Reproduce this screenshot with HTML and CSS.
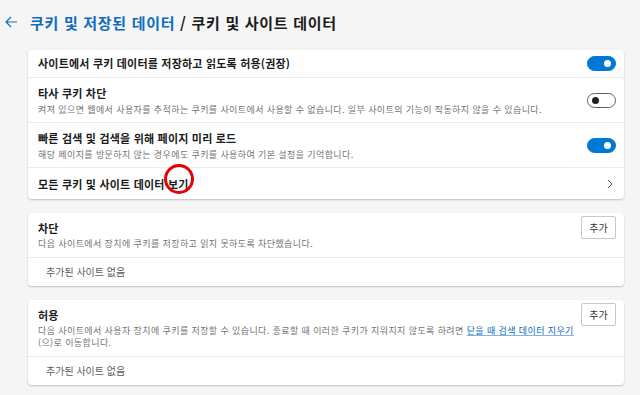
FILE: index.html
```html
<!DOCTYPE html>
<html lang="ko">
<head>
  <meta charset="UTF-8" />
  <meta name="viewport" content="width=device-width, initial-scale=1.0"/>
  <title>쿠키 및 사이트 데이터</title>
  <link rel="stylesheet" href="styles.css">
</head>
<body>
  <header class="page-head">
    <a class="back" href="#" aria-label="뒤로">
      <svg width="13" height="12" viewBox="0 0 13 12">
        <path d="M12 6H1.5M6 1L1 6l5 5" fill="none" stroke="#0f6cbd" stroke-width="1.2"/>
      </svg>
    </a>
    <h1><span class="crumb">쿠키 및 저장된 데이터</span> / 쿠키 및 사이트 데이터</h1>
  </header>

  <section class="card">
    <div class="row simple">
      <div class="row-text">
        <div class="row-title">사이트에서 쿠키 데이터를 저장하고 읽도록 허용(권장)</div>
      </div>
      <span class="toggle on"></span>
    </div>
    <div class="row">
      <div class="row-text">
        <div class="row-title">타사 쿠키 차단</div>
        <div class="row-desc">켜져 있으면 웹에서 사용자를 추적하는 쿠키를 사이트에서 사용할 수 없습니다. 일부 사이트의 기능이 작동하지 않을 수 있습니다.</div>
      </div>
      <span class="toggle"></span>
    </div>
    <div class="row">
      <div class="row-text">
        <div class="row-title">빠른 검색 및 검색을 위해 페이지 미리 로드</div>
        <div class="row-desc">해당 페이지를 방문하지 않는 경우에도 쿠키를 사용하여 기본 설정을 기억합니다.</div>
      </div>
      <span class="toggle on"></span>
    </div>
    <div class="row link-row">
      <div class="row-text">
        <div class="row-title">모든 쿠키 및 사이트 데이터 <span class="mark">보기</span></div>
      </div>
      <svg class="chevron" width="6" height="10" viewBox="0 0 6 10">
        <path d="M1 1l4 4-4 4" fill="none" stroke="#555" stroke-width="1"/>
      </svg>
    </div>
  </section>

  <section class="card">
    <div class="row list-head">
      <div class="row-text">
        <div class="row-title">차단</div>
        <div class="row-desc">다음 사이트에서 장치에 쿠키를 저장하고 읽지 못하도록 차단했습니다.</div>
      </div>
      <button class="add">추가</button>
    </div>
    <div class="empty">추가된 사이트 없음</div>
  </section>

  <section class="card">
    <div class="row list-head">
      <div class="row-text">
        <div class="row-title">허용</div>
        <div class="row-desc">다음 사이트에서 사용자 장치에 쿠키를 저장할 수 있습니다. 종료할 때 이러한 쿠키가 지워지지 않도록 하려면 <a href="#">닫을 때 검색 데이터 지우기</a>(으)로 이동합니다.</div>
      </div>
      <button class="add">추가</button>
    </div>
    <div class="empty">추가된 사이트 없음</div>
  </section>
</body>
</html>
```

FILE: styles.css
```css
body {
  margin: 0;
  font-family: "Noto Sans CJK KR", "Noto Sans", sans-serif;
  background: #f5f5f5;
  color: #1b1b1b;
}

.page-head {
  display: flex;
  align-items: center;
  height: 44px;
  padding: 0 0 6px 5px;
}

.back {
  display: flex;
  width: 25px;
}

h1 {
  margin: 0;
  font-size: 15px;
  font-weight: 700;
  letter-spacing: 0.7px;
}

.crumb {
  color: #0f6cbd;
}

.card {
  margin: 0 16px 14px 28px;
  background: white;
  border-radius: 4px;
  box-shadow: 0 1px 2px rgba(0, 0, 0, 0.22);
}

.row {
  display: flex;
  align-items: center;
  justify-content: space-between;
  padding: 7px 8px 6px 10px;
  border-top: 1px solid #ececec;
}

.card .row:first-child {
  border-top: none;
}

.row.simple {
  padding-top: 5px;
  padding-bottom: 6px;
}

.row.link-row {
  padding-top: 8px;
  padding-bottom: 7px;
}

.row-title {
  font-size: 11px;
  font-weight: 600;
  line-height: 16px;
  letter-spacing: 0.2px;
}

.row-desc {
  font-size: 9px;
  line-height: 12px;
  margin-top: 3px;
  color: #737373;
  letter-spacing: 0.4px;
}

.row-desc a {
  color: #0f6cbd;
  white-space: nowrap;
  text-decoration-color: #7fb4e6;
}

.toggle {
  position: relative;
  flex: none;
  width: 27px;
  height: 13px;
  border-radius: 8px;
  border: 1px solid #5f5f5f;
  background: white;
}

.toggle::after {
  content: "";
  position: absolute;
  top: 3px;
  left: 4px;
  width: 7px;
  height: 7px;
  border-radius: 50%;
  background: #222;
}

.toggle.on {
  background: #0078d4;
  border-color: #0078d4;
}

.toggle.on::after {
  left: auto;
  right: 4px;
  background: white;
}

.mark {
  position: relative;
}

.mark::after {
  content: "";
  position: absolute;
  left: -4px;
  top: -12px;
  width: 24px;
  height: 24px;
  border: 3px solid #e60000;
  border-radius: 50%;
}

.chevron {
  margin-right: 3px;
}

.list-head {
  align-items: flex-start;
  padding: 7px 8px 7px 10px;
}

.list-head .row-desc {
  margin-top: 2px;
}

.list-head .row-text {
  padding-right: 4px;
}

.add {
  flex: none;
  width: 35px;
  height: 23px;
  margin-top: -4px;
  padding: 0;
  background: white;
  border: 1px solid #c8c8c8;
  border-radius: 2px;
  font-family: inherit;
  font-size: 10px;
  color: #333;
}

.empty {
  padding: 6px 18px 6px;
  border-top: 1px solid #ececec;
  font-size: 10px;
  line-height: 16px;
  color: #5c5c5c;
}
```
